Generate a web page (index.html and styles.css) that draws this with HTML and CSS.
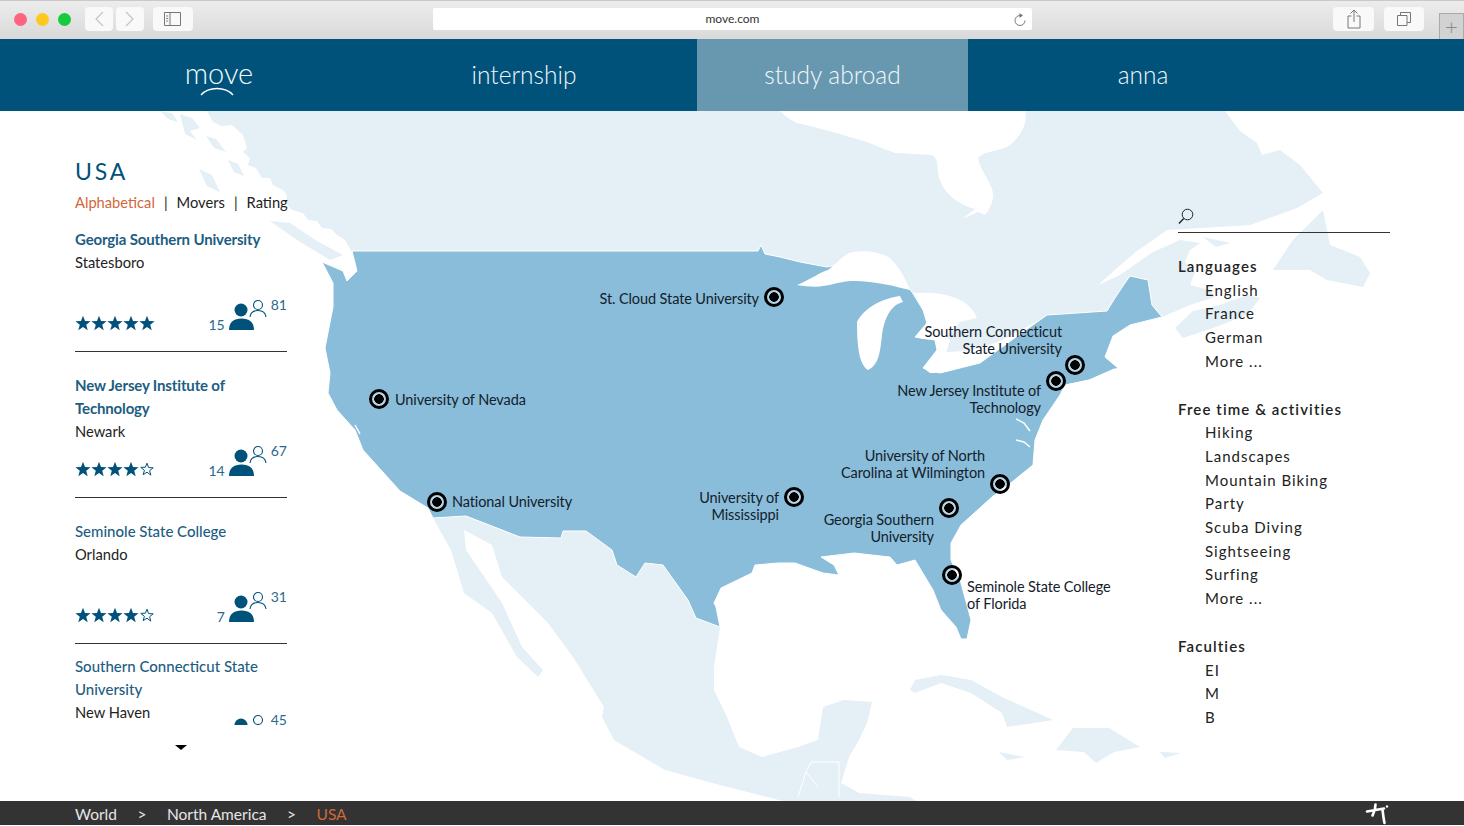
FILE: index.html
```html
<!DOCTYPE html>
<html lang="en">
  <head>
    <meta charset="UTF-8" />
    <meta name="viewport" content="width=device-width, initial-scale=1" />
    <title>move.com - USA</title>
    <link rel="stylesheet" href="styles.css">
  </head>
  <body>
    <svg class="defs" width="0" height="0">
      <defs>
        <symbol id="star" viewBox="0 0 16 16">
          <path d="M8 .8l2 5.2 5.6.3-4.4 3.500 1.500 5.400L8 12.100l-4.700 3.100 1.500-5.400L.4 6.300 6 6z" />
        </symbol>
        <symbol id="star-empty" viewBox="0 0 16 16">
          <path class="star-line" d="M8 2.200l1.600 4.400 4.600.2-3.600 2.900 1.200 4.400L8 11.200l-3.800 2.500 1.200-4.400-3.600-2.900 4.600-.2z" />
        </symbol>
        <symbol id="movers" viewBox="0 0 38 32">
          <circle cx="12" cy="11" r="6.500" fill="#01527a" />
          <path d="M0 31c0-8 5-11.500 12.500-11.500S25 23 25 31z" fill="#01527a" />
          <circle cx="29" cy="6" r="4.500" fill="none" stroke="#01527a" stroke-width="1.100" />
          <path d="M21 18c.5-4 3.500-6.500 8-6.500s7.500 2.500 8 6.500" fill="none" stroke="#01527a" stroke-width="1.100" />
        </symbol>
      </defs>
    </svg>

    <div class="chrome">
      <span class="light light-red"></span>
      <span class="light light-yellow"></span>
      <span class="light light-green"></span>
      <span class="btn btn-back">
        <svg width="12" height="18" viewBox="0 0 12 18"><path class="icon-faint" d="M10 2L3 9l7 7" /></svg>
      </span>
      <span class="btn btn-forward">
        <svg width="12" height="18" viewBox="0 0 12 18"><path class="icon-faint" d="M2 2l7 7-7 7" /></svg>
      </span>
      <span class="btn btn-sidebar">
        <svg width="18" height="15" viewBox="0 0 18 15"><path class="icon-grey" d="M.5.500h16v13H.5zM6 .500v13M2.200 4h2M2.200 6.500h2M2.200 9h2" /></svg>
      </span>
      <div class="url">
        <span>move.com</span>
        <svg class="reload" width="14" height="15" viewBox="0 0 14 15"><path class="icon-grey" d="M7 2.500a5 5 0 1 0 5 5" /><path d="M6.500 0l3.500 2.500-3.500 2.500z" fill="#777" /></svg>
      </div>
      <span class="btn btn-share">
        <svg width="14" height="20" viewBox="0 0 14 20"><path class="icon-grey" d="M4.500 7H1v12h12V7H9.500M7 13V1M3.500 4.500L7 1l3.500 3.500" /></svg>
      </span>
      <span class="btn btn-tabs">
        <svg width="14" height="14" viewBox="0 0 14 14"><path class="icon-grey" d="M.5 3.500h9.500v10H.5zM3.500 3.500V.5h10v10H10" /></svg>
      </span>
      <span class="new-tab">+</span>
    </div>

    <nav class="nav">
      <a class="nav-item logo">
        <span>move</span>
        <svg width="34" height="9" viewBox="0 0 34 9"><path d="M1 8c4-4.500 9-6.500 16-6.500S29 3.500 33 8" fill="none" stroke="#fff" stroke-width="1.300" /></svg>
      </a>
      <a class="nav-item">internship</a>
      <a class="nav-item active">study abroad</a>
      <a class="nav-item">anna</a>
    </nav>

    <main class="stage">
      <svg class="map" width="1464" height="690" viewBox="0 111 1464 690">
        <g class="land">
          <!-- canada -->
          <path d="M207 111L213 122 222 126 232 125 243 135 247 148 243 152 250 158 248 165 256 168 262 178 270 178 273 185 283 190 287 195 286 203 292 210 303 213 308 220 317 221 322 228 331 229 337 235 345 240 352 252 760 252 830 275 920 300 950 340 940 373 1047 316 1162 317 1190 305 1215 297 1210 290 1190 285 1195 272 1185 262 1190 250 1200 243 1180 240 1153 252 1120 275 1098 285 1117 268 1137 251 1160 235 1167 230 1200 228 1250 225 1297 208 1323 193 1300 165 1280 150 1262 155 1257 143 1240 131 1225 111z" />
          <path d="M160 111L172 113 178 122 168 119z" />
          <path d="M180 114L192 118 200 128 190 131 197 140 185 134z" />
          <path d="M199 169L212 175 220 192 207 186z" />
          <path d="M206 136L216 139 226 152 214 148z" />
          <path d="M228 160L238 164 244 176 234 172z" />
          <path d="M270 221L290 223 317 241 343 255 330 260 297 240z" />
          <path d="M1203 237L1230 243 1216 247z" />
          <path d="M1175 328L1193 311 1220 305 1247 295 1260 298 1247 315 1213 328 1183 338z" />
          <path d="M1273 270L1293 240 1323 210 1330 245 1360 257 1370 273 1363 287 1327 280 1310 270z" />
          <!-- mexico and central america -->
          <path d="M433 518L466 516 520 537 561 538 563 531 586 531 612 550 617 565 636 577 645 563 663 565 688 600 696 618 720 627 714 667 714 690 727 717 739 747 762 757 798 747 818 740 823 707 844 700 872 702 867 723 859 740 849 757 841 783 859 793 910 797 916 801 783 801 720 785 665 770 614 740 602 717 604 707 573 657 548 623 502 577 492 545 464 530 466 550 502 603 522 647 543 670 538 677 517 657 492 613 464 593 451 550z" />
          <!-- caribbean -->
          <path d="M910 690L915 680 941 675 971 680 1002 697 1053 720 1007 727 1002 713 971 693 941 683 915 693z" />
          <path d="M1056 750L1073 728 1109 728 1140 747 1114 752 1096 763 1084 752z" />
          <path d="M999 752L1025 757 1007 760z" />
          <path d="M1160 752L1181 753 1165 758z" />
        </g>
        <!-- hudson bay -->
        <path class="water" d="M780 111L1025 111C1028 122 1022 135 1010 145 1000 152 985 150 978 158 980 172 995 185 993 198 992 205 988 212 985 215L978 212 962 219 975 209C960 205 945 195 940 180 936 170 940 160 932 155L895 153C880 148 870 142 860 140 840 134 820 128 797 123 790 120 785 116 780 111z" />
        <path class="usa" d="M352 251L758 251 761 245 765 254 780 257 800 262 827 267 850 262 905 285 912 292 923 310 927 323 915 337 935 340 937 350 923 368 940 373 980 363 1023 332 1047 315 1107 311 1115 298 1125 283 1130 276 1148 280 1152 305 1162 317 1130 325 1113 336 1105 357 1118 368 1090 380 1065 385 1060 395 1043 420 1035 440 1033 465 1012 482 992 497 961 525 951 543 951 560 961 583 971 620 967 639 961 639 956 627 941 610 933 590 915 560 897 565 890 557 854 553 821 557 834 565 839 575 823 573 795 563 778 563 755 565 752 573 721 588 714 603 716 607 720 627 696 618 688 600 663 565 645 563 636 577 617 565 612 550 586 531 563 531 561 538 520 537 466 516 433 518 428 508 400 491 363 450 355 430 337 410 328 393 330 373 325 348 333 307 333 283 322 262 343 271 347 281 357 271z" />
        <!-- great lakes -->
        <path class="water" d="M797 285C810 280 820 272 828 270 838 262 845 253 853 252 868 250 880 252 890 258 900 268 905 278 910 290 895 286 870 280 850 281 835 282 825 290 797 285z" />
        <path class="water" d="M857 322C862 312 875 300 900 296L903 302C890 305 884 320 882 335 880 355 878 365 868 370 860 365 857 350 857 322z" />
        <path class="water" d="M913 293C930 292 945 293 955 298 968 302 975 312 977 318L960 322C950 338 935 342 918 338L915 337C925 330 930 320 925 310z" />
        <path class="water" d="M923 368C930 360 936 355 945 352 965 352 985 348 1010 337 1000 345 990 352 980 356 965 366 950 374 930 373z" />
        <path class="water-line" d="M1068 385L1090 380 1115 369M1016 419L1024 423 1030 431M1016 440L1024 442 1030 447M355 425L360 434" />
        <path class="border-line" d="M798 797L806 772 818 787M806 772L811 762 839 762 839 797" />
      </svg>

      <aside class="left">
        <h1 class="title">USA</h1>
        <div class="sort">
          <a class="sort-on">Alphabetical</a><i>|</i><a>Movers</a><i>|</i><a>Rating</a>
        </div>
        <div class="uni-list">
          <article class="uni uni-first">
            <h2 class="uni-name uni-name-bold">Georgia Southern University</h2>
            <p class="uni-city">Statesboro</p>
            <div class="uni-meta">
              <span class="stars">
                <svg><use href="#star" /></svg><svg><use href="#star" /></svg><svg><use href="#star" /></svg><svg><use href="#star" /></svg><svg><use href="#star" /></svg>
              </span>
              <span class="movers">
                <b>15</b><svg class="movers-icon"><use href="#movers" /></svg><em>81</em>
              </span>
            </div>
          </article>
          <article class="uni">
            <h2 class="uni-name uni-name-bold">New Jersey Institute of Technology</h2>
            <p class="uni-city">Newark</p>
            <div class="uni-meta">
              <span class="stars">
                <svg><use href="#star" /></svg><svg><use href="#star" /></svg><svg><use href="#star" /></svg><svg><use href="#star" /></svg><svg><use href="#star-empty" /></svg>
              </span>
              <span class="movers">
                <b>14</b><svg class="movers-icon"><use href="#movers" /></svg><em>67</em>
              </span>
            </div>
          </article>
          <article class="uni">
            <h2 class="uni-name">Seminole State College</h2>
            <p class="uni-city">Orlando</p>
            <div class="uni-meta">
              <span class="stars">
                <svg><use href="#star" /></svg><svg><use href="#star" /></svg><svg><use href="#star" /></svg><svg><use href="#star" /></svg><svg><use href="#star-empty" /></svg>
              </span>
              <span class="movers">
                <b>7</b><svg class="movers-icon"><use href="#movers" /></svg><em>31</em>
              </span>
            </div>
          </article>
          <article class="uni uni-last">
            <h2 class="uni-name">Southern Connecticut State University</h2>
            <p class="uni-city">New Haven</p>
            <div class="uni-meta">
              <span class="stars"></span>
              <span class="movers">
                <b></b><svg class="movers-icon"><use href="#movers" /></svg><em>45</em>
              </span>
            </div>
          </article>
        </div>
        <div class="more-caret"></div>
      </aside>

      <aside class="right">
        <div class="search">
          <svg width="16" height="17" viewBox="0 0 16 17"><circle cx="9.500" cy="6.500" r="5.300" fill="none" stroke="#222" stroke-width="1" /><path d="M5.700 10.500L1 15.500" stroke="#222" stroke-width="1.300" /></svg>
        </div>
        <section class="filter">
          <h3>Languages</h3>
          <ul>
            <li>English</li>
            <li>France</li>
            <li>German</li>
            <li>More ...</li>
          </ul>
        </section>
        <section class="filter">
          <h3>Free time &amp; activities</h3>
          <ul>
            <li>Hiking</li>
            <li>Landscapes</li>
            <li>Mountain Biking</li>
            <li>Party</li>
            <li>Scuba Diving</li>
            <li>Sightseeing</li>
            <li>Surfing</li>
            <li>More ...</li>
          </ul>
        </section>
        <section class="filter">
          <h3>Faculties</h3>
          <ul>
            <li>EI</li>
            <li>M</li>
            <li>B</li>
          </ul>
        </section>
      </aside>

      <span class="pin pin-stcloud"></span>
      <span class="pin pin-nevada"></span>
      <span class="pin pin-national"></span>
      <span class="pin pin-miss"></span>
      <span class="pin pin-georgia"></span>
      <span class="pin pin-nc"></span>
      <span class="pin pin-florida"></span>
      <span class="pin pin-scsu"></span>
      <span class="pin pin-njit"></span>

      <span class="tag tag-stcloud">St. Cloud State University</span>
      <span class="tag tag-nevada">University of Nevada</span>
      <span class="tag tag-national">National University</span>
      <span class="tag tag-miss">University of<br>Mississippi</span>
      <span class="tag tag-georgia">Georgia Southern<br>University</span>
      <span class="tag tag-nc">University of North<br>Carolina at Wilmington</span>
      <span class="tag tag-florida">Seminole State College<br>of Florida</span>
      <span class="tag tag-scsu">Southern Connecticut<br>State University</span>
      <span class="tag tag-njit">New Jersey Institute of<br>Technology</span>
    </main>

    <footer class="crumbs">
      <a>World</a><i>&gt;</i><a>North America</a><i>&gt;</i><a class="crumb-on">USA</a>
      <svg class="crumbs-logo" width="24" height="22" viewBox="0 0 24 22">
        <path d="M2 8.500L19 5.500M10.500 1.500c0 4-1 7.500-3 11M17.500 6c.5 5 1 9.500 2 14" fill="none" stroke="#fff" stroke-width="2.600" stroke-linecap="round" />
        <circle cx="22" cy="3.500" r="1.200" fill="#fff" />
      </svg>
    </footer>
  </body>
</html>
```

FILE: styles.css
```css
html,
body {
  margin: 0;
  padding: 0;
  height: 826px;
  overflow: hidden;
  background: #fff;
  font-family: "Lato", Arial, sans-serif;
}
.defs {
  display: block;
  height: 0;
}

/* browser bar */
.chrome {
  display: flex;
  align-items: center;
  box-sizing: border-box;
  height: 39px;
  padding: 0 0 2px 14px;
  border-top: 1px solid #c9c9c9;
  background: linear-gradient(#ececec, #d9d9d9);
}
.light {
  width: 13px;
  height: 13px;
  border-radius: 50%;
  margin-right: 9px;
}
.light-red {
  background: #fc6480;
}
.light-yellow {
  background: #fdc91e;
}
.light-green {
  background: #15cc3c;
  margin-right: 0;
}
.btn {
  display: flex;
  align-items: center;
  justify-content: center;
  height: 24px;
  background: #f9f9f9;
  border-radius: 4px;
}
.btn-back {
  width: 28px;
  margin-left: 14px;
}
.btn-forward {
  width: 28px;
  margin-left: 3px;
}
.btn-sidebar {
  width: 40px;
  margin-left: 9px;
}
.btn-share {
  width: 41px;
  margin-left: 301px;
}
.btn-tabs {
  width: 40px;
  margin-left: 10px;
}
.icon-faint,
.icon-grey {
  fill: none;
  stroke: #c4c4c4;
  stroke-width: 1.2;
}
.icon-grey {
  stroke: #777;
  stroke-width: 1;
}
.url {
  display: flex;
  align-items: center;
  justify-content: center;
  position: relative;
  box-sizing: border-box;
  width: 599px;
  height: 22px;
  margin-left: 240px;
  padding-bottom: 2px;
  background: #fff;
  border-radius: 2px;
  font-size: 12px;
  color: #333;
}
.reload {
  position: absolute;
  right: 5px;
  top: 5px;
}
.new-tab {
  align-self: flex-end;
  width: 23px;
  height: 25px;
  margin: 0 0 -2px 15px;
  border: 1px solid #aaa;
  border-bottom: 0;
  background: #d2d2d2;
  color: #8a8a8a;
  font-size: 22px;
  font-weight: 300;
  line-height: 26px;
  text-align: center;
}

/* main nav */
.nav {
  display: grid;
  grid-template-columns: 264px 346px 271px 350px;
  height: 72px;
  padding-left: 87px;
  background: #01527a;
}
.nav-item {
  display: flex;
  align-items: center;
  justify-content: center;
  box-sizing: border-box;
  padding-bottom: 2px;
  color: #f2f8fb;
  font-size: 24.500px;
  font-weight: 300;
}
.nav-item.active {
  background: #6898b0;
}
.logo {
  flex-direction: column;
  font-size: 29px;
  line-height: 26px;
  padding: 6px 0 0;
}
.logo svg {
  display: block;
  margin: 1px 4px 0 0;
}

/* content */
.stage {
  position: relative;
  display: flex;
  justify-content: space-between;
  height: 690px;
  padding: 0 74px 0 75px;
  overflow: hidden;
}
.map {
  position: absolute;
  left: 0;
  top: 0;
}
.land path {
  fill: #e4eff6;
}
.water {
  fill: #fff;
}
.usa {
  fill: #89bdd9;
  stroke: #fff;
  stroke-width: 1;
  stroke-linejoin: round;
}
.water-line,
.border-line {
  fill: none;
  stroke: #fff;
  stroke-width: 1.500;
}
.border-line {
  stroke-width: 1;
}
.left,
.right {
  position: relative;
  width: 212px;
}
.title {
  margin: 47px 0 0;
  font-size: 23px;
  font-weight: 400;
  line-height: 26px;
  letter-spacing: 2.800px;
  color: #01527a;
}
.sort {
  margin-top: 8px;
  font-size: 14.700px;
  line-height: 20px;
  color: #222;
  white-space: nowrap;
}
.sort i {
  margin: 0 9px;
  font-style: normal;
}
.sort-on {
  color: #d2683a;
}
.uni-list {
  height: 496px;
  margin-top: 17px;
  overflow: hidden;
}
.uni {
  display: flex;
  flex-direction: column;
  box-sizing: border-box;
  height: 146px;
  padding: 23px 0 20px;
  border-bottom: 1px solid #333;
}
.uni-first {
  height: 123px;
  padding-top: 0;
}
.uni-last {
  height: 123px;
  padding-top: 12px;
  border-bottom: 0;
}
.uni-last .uni-meta {
  margin-top: -12px;
}
.uni-name {
  margin: -1px 0 0;
  font-size: 15px;
  font-weight: 500;
  line-height: 23px;
  color: #1d5d82;
}
.uni-name-bold {
  font-weight: 700;
  letter-spacing: -0.15px;
}
.uni-city {
  margin: 0;
  font-size: 14.700px;
  line-height: 23px;
  color: #222;
}
.uni-meta {
  display: flex;
  align-items: flex-end;
  justify-content: space-between;
  margin-top: auto;
}
.stars {
  display: flex;
}
.stars svg {
  width: 16px;
  height: 16px;
  fill: #01527a;
}
.star-line {
  fill: none;
  stroke: #01527a;
  stroke-width: 1;
}
.movers {
  display: flex;
  align-items: flex-end;
  font-size: 14px;
  color: #2e6a8c;
}
.movers b {
  font-weight: 400;
  line-height: 16px;
  margin: 0 4px -2px 0;
}
.movers em {
  font-style: normal;
  line-height: 16px;
  margin: 0 0 18px 4px;
}
.movers-icon {
  width: 38px;
  height: 32px;
}
.more-caret {
  width: 0;
  height: 0;
  margin: 20px auto 0;
  border-left: 6px solid transparent;
  border-right: 6px solid transparent;
  border-top: 5px solid #000;
}

/* filters */
.search {
  height: 24px;
  margin-top: 96px;
  padding-top: 1px;
  border-bottom: 1px solid #333;
}
.filter {
  margin-bottom: 24px;
  font-size: 15px;
  line-height: 23.700px;
  letter-spacing: 1px;
  color: #222;
}
.filter:first-of-type {
  margin-top: 22px;
}
.filter h3 {
  margin: 0;
  font-size: 15px;
  font-weight: 600;
  letter-spacing: 1.100px;
}
.filter ul {
  margin: 0;
  padding: 0 0 0 27px;
  list-style: none;
}

/* pins on the map */
.pin {
  position: absolute;
  box-sizing: border-box;
  width: 20px;
  height: 20px;
  border: 3px solid #000;
  border-radius: 50%;
  background: radial-gradient(circle, #000 0 4.5px, rgba(255, 255, 255, 0.35) 5px);
}
.pin-stcloud { left: 764px; top: 176px; }
.pin-nevada { left: 369px; top: 278px; }
.pin-national { left: 427px; top: 381px; }
.pin-miss { left: 784px; top: 376px; }
.pin-georgia { left: 939px; top: 387px; }
.pin-nc { left: 990px; top: 363px; }
.pin-florida { left: 942px; top: 454px; }
.pin-scsu { left: 1065px; top: 244px; }
.pin-njit { left: 1046px; top: 260px; }

.tag {
  position: absolute;
  margin-top: 1px;
  font-size: 14.500px;
  line-height: 16.500px;
  letter-spacing: -0.1px;
  color: #14202c;
  white-space: nowrap;
}
.tag-stcloud { right: 705px; top: 179px; }
.tag-nevada { left: 395px; top: 280px; }
.tag-national { left: 452px; top: 382px; }
.tag-miss { right: 685px; top: 378px; text-align: right; }
.tag-georgia { right: 530px; top: 400px; text-align: right; }
.tag-nc { right: 479px; top: 336px; text-align: right; }
.tag-florida { left: 967px; top: 467px; }
.tag-scsu { right: 402px; top: 212px; text-align: right; }
.tag-njit { right: 423px; top: 271px; text-align: right; }

/* breadcrumb */
.crumbs {
  display: flex;
  align-items: center;
  position: relative;
  box-sizing: border-box;
  height: 24px;
  padding: 2px 0 0 75px;
  background: #333;
  color: #e6e6e6;
  font-size: 15.500px;
}
.crumbs i {
  margin: 0 20.500px;
  font-style: normal;
}
.crumb-on {
  color: #d2683a;
}
.crumbs-logo {
  position: absolute;
  left: 1365px;
  top: 2px;
}
```
